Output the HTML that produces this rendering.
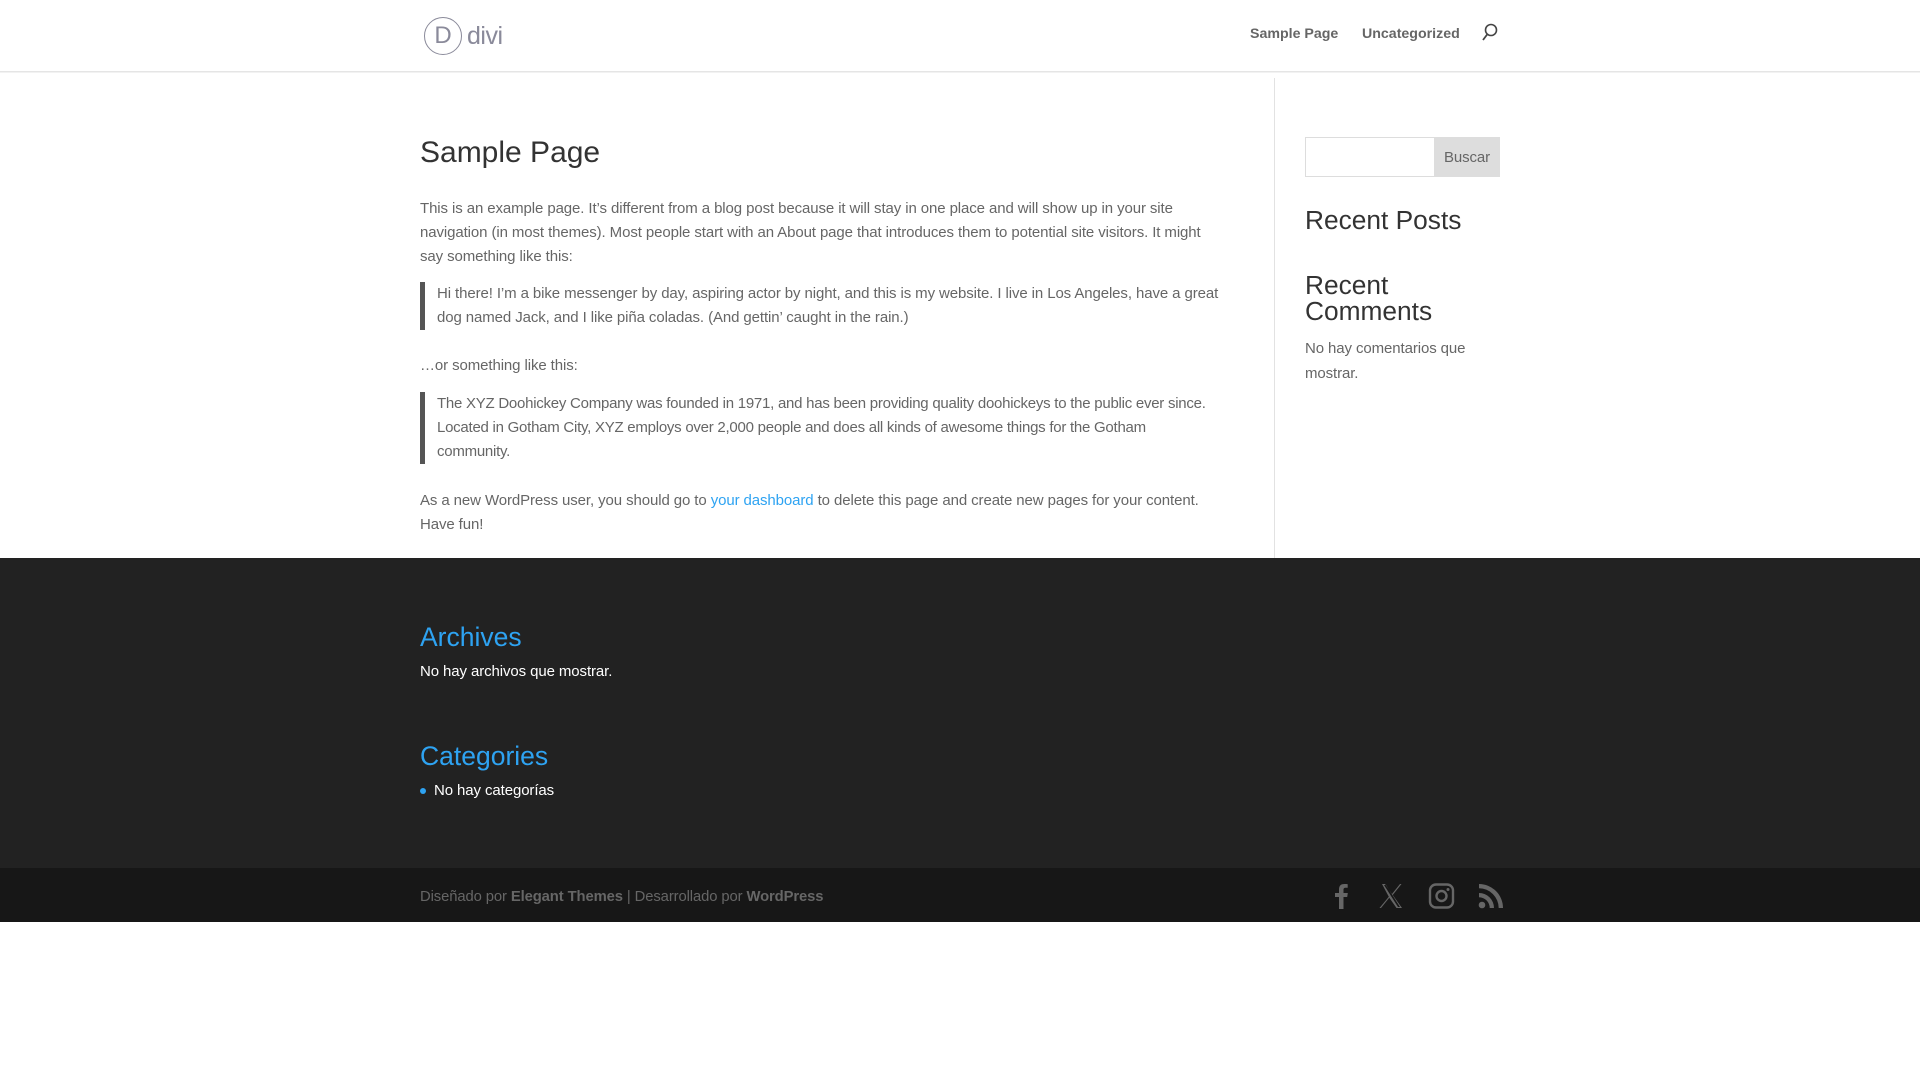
<!DOCTYPE html>
<html><head><meta charset="utf-8"><style>
*{margin:0;padding:0;box-sizing:border-box}
body{width:1920px;height:1080px;background:#fff;font-family:"Liberation Sans",sans-serif;color:#666;font-size:15px;letter-spacing:-0.1px;line-height:24px;position:relative;overflow:hidden}
.a{position:absolute}
header{position:absolute;left:0;top:0;width:1920px;height:72px;border-bottom:1px solid #e5e5e5;box-shadow:0 1px 0 rgba(0,0,0,.05)}
.nav{font-weight:bold;color:#666;font-size:14.2px;letter-spacing:0}
p{margin:0}
.bq{border-left:5px solid #555;padding-left:12px}
h1,h2,h4{font-weight:normal;color:#333;letter-spacing:0}
a{color:#2ea3f2;text-decoration:none}
</style></head><body>
<header>
  <div class="a" style="left:424px;top:17px;width:38px;height:38px;border:1.5px solid #8a8a9a;border-radius:50%;color:#8a8a9a;font-size:24px;line-height:35px;text-align:center">D</div>
  <div class="a" style="left:467px;top:20px;font-size:25px;color:#8a8a9a;line-height:32px;letter-spacing:-0.5px">divi</div>
  <div class="a nav" style="left:1250px;top:22px">Sample Page</div>
  <div class="a nav" style="left:1362px;top:22px">Uncategorized</div>
  <svg class="a" style="left:1481px;top:23px" width="18" height="20" viewBox="0 0 18 20"><circle cx="10" cy="7" r="5.5" fill="none" stroke="#444" stroke-width="1.6"/><line x1="6.5" y1="11" x2="2" y2="17" stroke="#444" stroke-width="1.8"/></svg>
</header>
<div class="a" style="left:1274px;top:78px;width:1px;height:480px;background:#e2e2e2"></div>

<h1 class="a" style="left:420px;top:133px;font-size:30px;line-height:40px">Sample Page</h1>
<div class="a" style="left:420px;top:197px;width:800px">
<p>This is an example page. It’s different from a blog post because it will stay in one place and will show up in your site navigation (in most themes). Most people start with an About page that introduces them to potential site visitors. It might say something like this:</p>
</div>
<div class="a bq" style="left:420px;top:282px;width:800px"><p>Hi there! I’m a bike messenger by day, aspiring actor by night, and this is my website. I live in Los Angeles, have a great dog named Jack, and I like piña coladas. (And gettin’ caught in the rain.)</p></div>
<div class="a" style="left:420px;top:354px">…or something like this:</div>
<div class="a bq" style="left:420px;top:392px;width:800px;letter-spacing:-0.25px"><p>The XYZ Doohickey Company was founded in 1971, and has been providing quality doohickeys to the public ever since. Located in Gotham City, XYZ employs over 2,000 people and does all kinds of awesome things for the Gotham community.</p></div>
<div class="a" style="left:420px;top:489px;width:800px"><p>As a new WordPress user, you should go to <a>your dashboard</a> to delete this page and create new pages for your content. Have fun!</p></div>

<div class="a" style="left:1305px;top:137px;width:130px;height:40px;border:1px solid #ddd;border-right:none"></div>
<div class="a" style="left:1434px;top:137px;width:66px;height:40px;background:#ddd;color:#666;text-align:center;line-height:41px;font-size:15px">Buscar</div>
<h4 class="a" style="left:1305px;top:204px;font-size:26.3px;line-height:32px">Recent Posts</h4>
<h4 class="a" style="left:1305px;top:272px;font-size:26.3px;line-height:26px;width:160px">Recent Comments</h4>
<div class="a" style="left:1305px;top:336px;width:190px;line-height:25px">No hay comentarios que mostrar.</div>

<div class="a" style="left:0;top:558px;width:1920px;height:310px;background:#222"></div>
<h4 class="a" style="left:420px;top:621px;font-size:26.5px;line-height:32px;color:#2ea3f2">Archives</h4>
<div class="a" style="left:420px;top:660px;color:#fff">No hay archivos que mostrar.</div>
<h4 class="a" style="left:420px;top:740px;font-size:26.5px;line-height:32px;color:#2ea3f2">Categories</h4>
<div class="a" style="left:420px;top:788px;width:6px;height:6px;border-radius:50%;background:#2ea3f2"></div>
<div class="a" style="left:434px;top:779px;color:#fff">No hay categorías</div>

<div class="a" style="left:0;top:868px;width:1920px;height:54px;background:#171717"></div>
<div class="a" style="left:420px;top:885px;color:#666;font-size:14.8px">Diseñado por <b>Elegant Themes</b> | Desarrollado por <b>WordPress</b></div>
<svg class="a" style="left:1334px;top:883px" width="170" height="26" viewBox="0 0 170 26" fill="#666">
<path d="M5 26V14H1V10h4V6.5C5 2.5 7 1 10.5 1c1.5 0 2.8.1 3.2.2v3.6h-2c-1.8 0-2.2.8-2.2 2.1V10h4.3l-.6 4H9.5v12z"/>
<path d="M48 1h3l7 10 8-10h1.5l-8.8 11L68 25h-5.5l-7.2-10.2L47 25h-1.5l9.3-11.3zM50 2l14 22h2L52 2z" fill-rule="evenodd"/>
<rect x="96" y="1.5" width="23" height="23" rx="6" fill="none" stroke="#666" stroke-width="2.4"/>
<circle cx="107.5" cy="13" r="5" fill="none" stroke="#666" stroke-width="2.4"/><circle cx="114" cy="6.5" r="1.5"/>
<circle cx="148" cy="22" r="3.3"/>
<path d="M145 10a15 15 0 0 1 15 15h-4.3A10.7 10.7 0 0 0 145 14.3z"/>
<path d="M145 1a24 24 0 0 1 24 24h-4.3A19.7 19.7 0 0 0 145 5.3z"/>
</svg>
</body></html>
